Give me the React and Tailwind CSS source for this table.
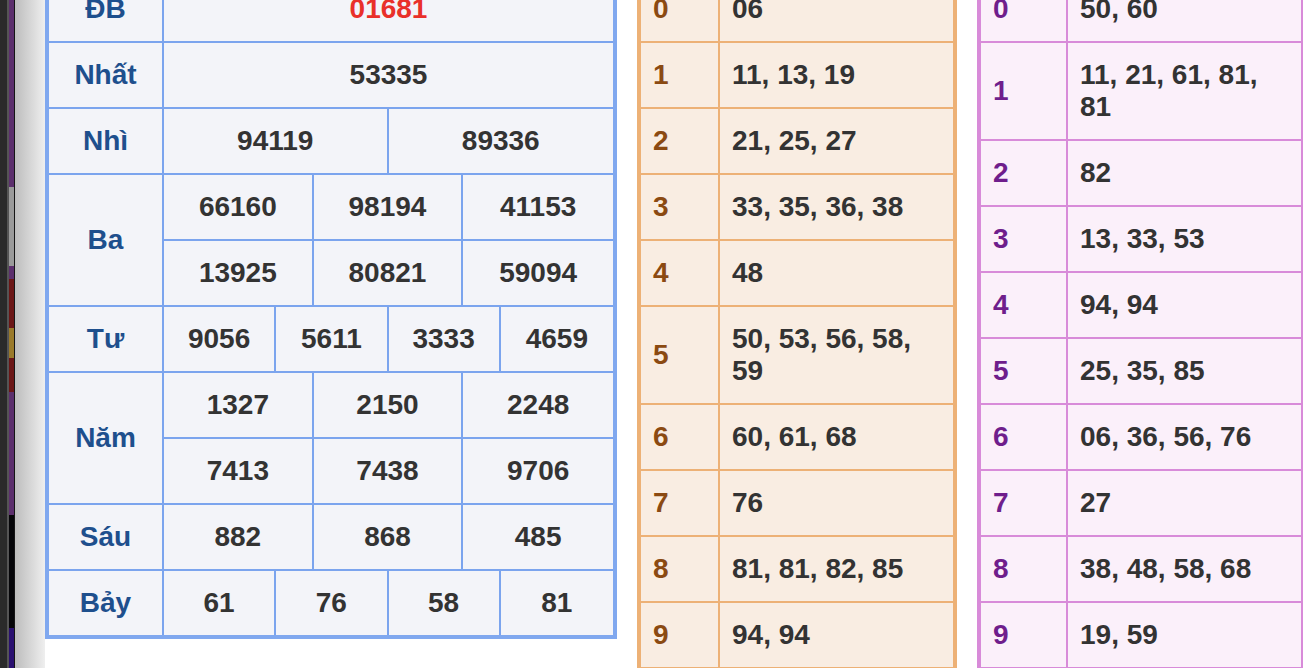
const font = { fontFamily: '"Liberation Sans", Arial, sans-serif' }

const prizes = [
  { label: 'ĐB', rows: [['01681']], red: true },
  { label: 'Nhất', rows: [['53335']] },
  { label: 'Nhì', rows: [['94119', '89336']] },
  { label: 'Ba', rows: [['66160', '98194', '41153'], ['13925', '80821', '59094']] },
  { label: 'Tư', rows: [['9056', '5611', '3333', '4659']] },
  { label: 'Năm', rows: [['1327', '2150', '2248'], ['7413', '7438', '9706']] },
  { label: 'Sáu', rows: [['882', '868', '485']] },
  { label: 'Bảy', rows: [['61', '76', '58', '81']] },
]

const heads = [
  ['0', '06'],
  ['1', '11, 13, 19'],
  ['2', '21, 25, 27'],
  ['3', '33, 35, 36, 38'],
  ['4', '48'],
  ['5', '50, 53, 56, 58, 59'],
  ['6', '60, 61, 68'],
  ['7', '76'],
  ['8', '81, 81, 82, 85'],
  ['9', '94, 94'],
]

const tails = [
  ['0', '50, 60'],
  ['1', '11, 21, 61, 81, 81'],
  ['2', '82'],
  ['3', '13, 33, 53'],
  ['4', '94, 94'],
  ['5', '25, 35, 85'],
  ['6', '06, 36, 56, 76'],
  ['7', '27'],
  ['8', '38, 48, 58, 68'],
  ['9', '19, 59'],
]

const gridCols = {
  1: 'grid-cols-1',
  2: 'grid-cols-2',
  3: 'grid-cols-3',
  4: 'grid-cols-4',
}

function PrizeTable() {
  return (
    <div className="w-[572px] shrink-0 border-4 border-[#80a8ef] bg-[#f3f4f9]">
      {prizes.map((p, i) => (
        <div
          key={p.label}
          className={`flex ${i < prizes.length - 1 ? 'border-b-2 border-[#7ba4ee]' : ''}`}
        >
          <div className="w-[115px] shrink-0 border-r-2 border-[#7ba4ee] flex items-center justify-center text-[#1e4f8d]">
            {p.label}
          </div>
          <div className="flex-1 flex flex-col">
            {p.rows.map((r, j) => (
              <div
                key={j}
                className={`grid ${gridCols[r.length]} ${j < p.rows.length - 1 ? 'h-[66px] border-b-2 border-[#7ba4ee]' : 'h-[64px]'}`}
              >
                {r.map((n, k) => (
                  <div
                    key={k}
                    className={`flex items-center justify-center ${k < r.length - 1 ? 'border-r-2 border-[#7ba4ee]' : ''} ${p.red ? 'text-[#e9302a]' : 'text-[#333]'}`}
                  >
                    {n}
                  </div>
                ))}
              </div>
            ))}
          </div>
        </div>
      ))}
    </div>
  )
}

function LotoTable({ data, wide, colors }) {
  return (
    <div className={`${wide ? 'w-[328px]' : 'w-[320px]'} shrink-0 border-4 ${colors.border} ${colors.bg}`}>
      {data.map(([d, nums], i) => (
        <div
          key={d}
          className={`flex ${i < data.length - 1 ? `border-b-2 ${colors.line}` : ''}`}
        >
          <div className={`${wide ? 'w-[87px]' : 'w-[79px]'} shrink-0 border-r-2 ${colors.line} flex items-center pl-[12px] ${colors.digit}`}>
            {d}
          </div>
          <div className="flex-1 min-h-[64px] flex items-center pl-[12px] pr-[12px] py-[16px] text-[#333]">
            {nums}
          </div>
        </div>
      ))}
    </div>
  )
}

function SideStrip() {
  return (
    <div className="flex shrink-0 h-full">
      <div className="w-[7px] bg-[#2a2a2a]" />
      <div className="w-[2px] bg-[#555]" />
      <div className="w-[5px] flex flex-col">
        <div className="h-[187px] bg-[#5c2f6d]" />
        <div className="h-[79px] bg-[#9a9a9a]" />
        <div className="h-[13px] bg-[#5c2f6d]" />
        <div className="h-[49px] bg-[#6b1616]" />
        <div className="h-[30px] bg-[#9a7a2a]" />
        <div className="h-[34px] bg-[#6b1616]" />
        <div className="h-[123px] bg-[#5c2f6d]" />
        <div className="h-[113px] bg-[#050508]" />
        <div className="flex-1 bg-[#2a1070]" />
      </div>
      <div className="w-[1px] bg-[#151515]" />
      <div className="w-[30px] bg-gradient-to-r from-[#bdbdbd] to-[#efefef]" />
    </div>
  )
}

export default function App() {
  return (
    <div className="w-[1303px] h-[668px] overflow-hidden flex bg-white" style={font}>
      <SideStrip />
      <div className="flex gap-[20px] items-start -mt-[27px] text-[28px] leading-[32px] font-bold">
        <PrizeTable />
        <LotoTable
          data={heads}
          colors={{
            border: 'border-[#edb176]',
            line: 'border-[#edb176]',
            bg: 'bg-[#f9ede2]',
            digit: 'text-[#8b4a12]',
          }}
        />
        <LotoTable
          data={tails}
          wide
          colors={{
            border: 'border-[#d88bd9]',
            line: 'border-[#d88bd9]',
            bg: 'bg-[#fbf0fa]',
            digit: 'text-[#6f1e8c]',
          }}
        />
      </div>
    </div>
  )
}
